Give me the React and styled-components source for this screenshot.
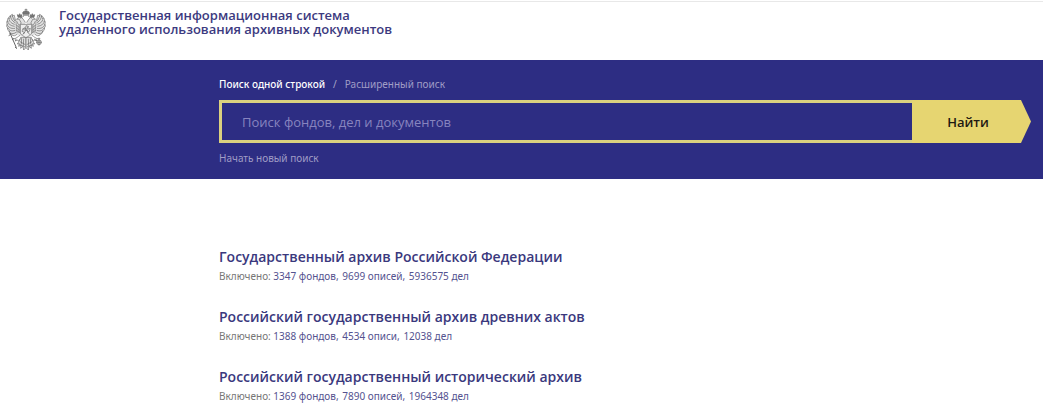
import React from "react";
import styled, { createGlobalStyle } from "styled-components";

const GlobalStyle = createGlobalStyle`
  *, *::before, *::after { box-sizing: border-box; }
  body {
    margin: 0;
    background: #fff;
    font-family: "Noto Sans", "Open Sans", sans-serif;
    font-size: 10px;
    line-height: 14px;
    color: #777;
  }
`;

const Header = styled.header`
  display: flex;
  align-items: flex-start;
  gap: 13px;
  min-height: 59px;
  margin-top: 1px;
  padding: 6px;
  border-top: 1px solid #e8e8e8;
`;

const Emblem = styled.svg`
  flex: none;
  width: 40px;
  height: 44px;
`;

const SiteTitle = styled.a`
  color: #3c3a80;
  font-family: "Open Sans", "Noto Sans", sans-serif;
  font-size: 13px;
  font-weight: 600;
  line-height: 14px;
  text-decoration: none;
`;

const SearchBand = styled.section`
  padding: 16px 12px 13px 21%;
  background: #2d2d83;
`;

const Modes = styled.nav`
  display: flex;
  gap: 8px;
  line-height: 16px;
  color: #a9a6c8;
`;

const ModeLink = styled.a`
  color: ${(p) => (p.$active ? "#fff" : "#a09dc6")};
  font-weight: ${(p) => (p.$active ? 500 : 400)};
  text-decoration: none;
`;

const SearchForm = styled.form`
  display: flex;
  height: 43px;
  margin: 8px 0 7px;
`;

const SearchInput = styled.input`
  flex: 1;
  min-width: 0;
  padding: 0 20px;
  border: 3px solid #dbd17f;
  border-right: 0;
  border-radius: 0;
  background: transparent;
  color: #fff;
  font: 400 13px/20px "Open Sans", "Noto Sans", sans-serif;
  outline: 0;

  &::placeholder { color: #8784bf; opacity: 1; }
`;

const SearchButton = styled.button`
  flex: none;
  width: 119px;
  padding: 0 7px 0 0;
  border: 0;
  background: #e6d571;
  color: #1f1a12;
  font: 600 13px/20px "Open Sans", "Noto Sans", sans-serif;
  clip-path: polygon(0 0, calc(100% - 10px) 0, 100% 50%, calc(100% - 10px) 100%, 0 100%);
`;

const ResetLink = styled.a`
  display: block;
  line-height: 16px;
  color: #a09dc6;
  text-decoration: none;
`;

const ArchiveList = styled.main`
  display: flex;
  flex-direction: column;
  gap: 22px;
  padding: 67px 12px 0 21%;
`;

const ArchiveTitle = styled.h2`
  margin: 0;
  font-family: "Open Sans", "Noto Sans", sans-serif;
  font-size: 14px;
  font-weight: 600;
  line-height: 22px;
`;

const ArchiveLink = styled.a`
  color: #3a387d;
  text-decoration: none;
`;

const Summary = styled.p`
  margin: 0;
  line-height: 16px;
`;

const Count = styled.a`
  margin-right: 1px;
  color: #54528f;
  text-decoration: none;
`;

const archives = [
  { name: "Государственный архив Российской Федерации", counts: ["3347 фондов", "9699 описей", "5936575 дел"] },
  { name: "Российский государственный архив древних актов", counts: ["1388 фондов", "4534 описи", "12038 дел"] },
  { name: "Российский государственный исторический архив", counts: ["1369 фондов", "7890 описей", "1964348 дел"] },
];

function Eagle() {
  return (
    <Emblem viewBox="0 0 120 132" fill="none" stroke="#666" strokeWidth="2" aria-hidden="true">
      <defs>
        <g id="eagle-half">
          <path
            d="M57 45C54 36 50 30 43 27C38 26 35 29 32 34C20 30 24 22 19 19C14 20 12 24 13 28C8 29 6 35 7 40C2 42 2 48 4 53C1 58 4 62 8 64C7 70 10 74 16 74C18 81 26 82 32 79L44 84L57 75Z"
            fill="#e2e2e2"
            stroke="none"
          />
          <path d="M58 44C54 36 50 30 43 27C38 26 35 29 32 34L39 33C40 37 44 39 45 44C45 50 39 53 36 48C34 42 32 39 28 37" />
          <path d="M36 27L34 20L38 22L41 17L44 22L48 20L46 27Z" fill="#777" />
          <path d="M28 37L25 22M28 40C22 35 20 27 19 19M27 44C18 39 14 31 13 23M26 49C14 46 9 38 8 29M26 55C13 54 6 47 4 38M27 61C14 63 6 57 3 49M28 67C17 71 9 67 5 60M30 73C22 79 14 77 10 71M34 78C28 84 22 85 17 80" />
          <path d="M25 22C21 22 19 24 19 27M19 19C15 20 13 24 14 28M13 23C9 25 8 29 10 33M8 29C4 32 4 36 6 41M4 38C1 42 2 47 5 50M3 49C0 54 3 59 7 61M5 60C4 66 7 70 12 71M10 71C11 76 14 79 19 79" />
          <path d="M30 42L33 75M36 51L37 74M41 52L41 75M29 50L40 58M29 58L40 66M30 66L41 74" strokeWidth="1.5" />
          <path d="M42 82C35 86 32 91 25 92L31 95L27 99L35 96L38 100L41 93" />
          <path
            d="M44 88C42 97 38 102 34 108L40 107L38 115L45 111L44 121L51 115L53 126L60 119V88Z"
            fill="#e2e2e2"
          />
          <path d="M47 90L46 109M53 92L52 114M42 101L58 110M40 109L57 117" />
        </g>
      </defs>
      <use href="#eagle-half" />
      <use href="#eagle-half" transform="matrix(-1 0 0 1 120 0)" />
      <path d="M51 19C48 12 53 9 60 9C67 9 72 12 69 19Z" fill="#777" />
      <path d="M60 9V2M56 5H64M51 22H69M54 24L42 31M66 24L78 31" />
      <path d="M43 49H77V75C76 82 67 84 60 89C53 84 44 82 43 75Z" fill="#eee" />
      <path d="M50 80L55 73L48 70L51 61L58 63L60 53L67 55L65 64L73 61L70 70L64 72L72 80M55 58L67 74M51 65L66 68M66 55L53 78" />
      <path d="M12 75L31 119M8 83L14 79L12 75M24 91L18 96M27 117L33 122" strokeWidth="3" />
      <circle cx="99" cy="103" r="7" fill="#ccc" />
      <path d="M84 93L94 99M99 93V113M91 103H107M99 89V96M95 92H103" />
    </Emblem>
  );
}

export default function App() {
  return (
    <>
      <GlobalStyle />
      <Header>
        <Eagle />
        <SiteTitle href="#">
          Государственная информационная система
          <br />
          удаленного использования архивных документов
        </SiteTitle>
      </Header>
      <SearchBand>
        <Modes>
          <ModeLink href="#" $active>Поиск одной строкой</ModeLink>
          <span>/</span>
          <ModeLink href="#">Расширенный поиск</ModeLink>
        </Modes>
        <SearchForm onSubmit={(e) => e.preventDefault()}>
          <SearchInput type="text" aria-label="Поиск фондов, дел и документов" placeholder="Поиск фондов, дел и документов" />
          <SearchButton type="submit">Найти</SearchButton>
        </SearchForm>
        <ResetLink href="#">Начать новый поиск</ResetLink>
      </SearchBand>
      <ArchiveList>
        {archives.map(({ name, counts }) => (
          <article key={name}>
            <ArchiveTitle>
              <ArchiveLink href="#">{name}</ArchiveLink>
            </ArchiveTitle>
            <Summary>
              Включено:{" "}
              {counts.map((count, i) => (
                <React.Fragment key={count}>
                  <Count href="#">{count}{i < counts.length - 1 ? "," : ""}</Count>{" "}
                </React.Fragment>
              ))}
            </Summary>
          </article>
        ))}
      </ArchiveList>
    </>
  );
}
